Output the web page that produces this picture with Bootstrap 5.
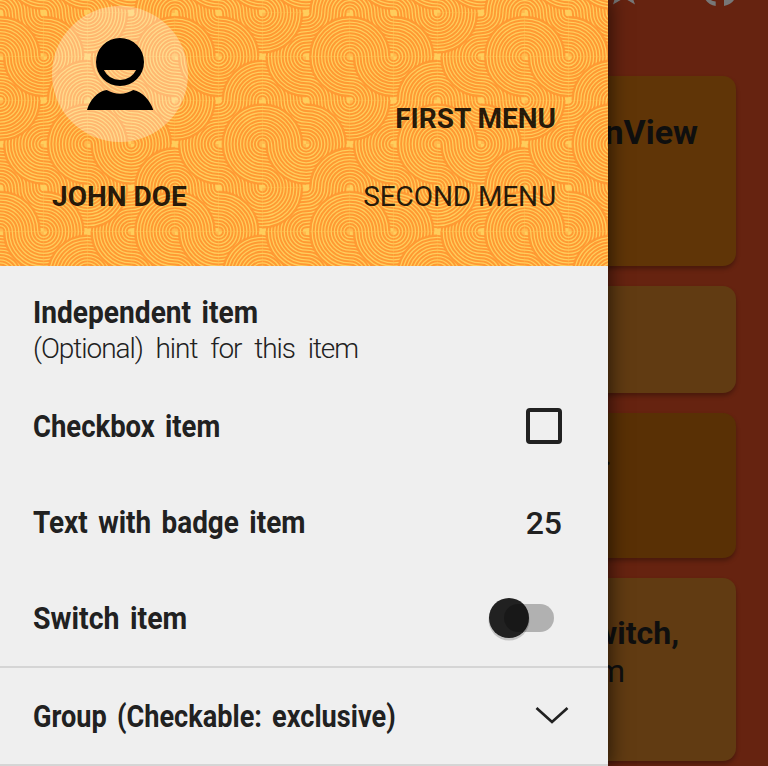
<!DOCTYPE html>
<html lang="en">
<head>
<meta charset="utf-8">
<title>Navigation drawer</title>
<link href="https://cdn.jsdelivr.net/npm/bootstrap@5.3.0/dist/css/bootstrap.min.css" rel="stylesheet">
<style>
body{font-family:Roboto,"Noto Sans",sans-serif;background:#662310;height:766px;color:#0f0f0f}
.stage{width:768px;height:766px}
.topbar{height:76px;padding:0 24px 0 0}
.topbar svg{height:8px}
.tiles{padding-right:32px;gap:20px}
.tile{border-radius:13px;box-shadow:0 3px 4px rgba(0,0,0,.28);padding-left:400px;flex:none;white-space:nowrap}
.tone-a{background:#603507}.tone-b{background:#613b12}.tone-c{background:#593005}
.h-1{height:190px;padding-top:34px;padding-right:38px;font-size:34px;line-height:44px}
.h-2{height:107px}
.h-3{height:145px;padding-top:22px;padding-right:124px;font-size:32px;line-height:38px}
.h-4{height:183px;padding-top:36px;font-size:32px;line-height:38px}
.line-1{padding-right:57px}.line-2{padding-right:111px}
.drawer{width:608px;background:#efefef;box-shadow:0 0 18px 2px rgba(0,0,0,.6);z-index:2}
.head{height:266px;background:#ffcc5c;color:rgba(0,0,0,.87);font-size:28px;line-height:34px}
.head-content{height:266px;padding:6px 52px 0}
.avatar{width:136px;height:136px;background:rgba(255,255,255,.3)}
.first-menu{line-height:28px;margin-bottom:9px}
.second-menu{letter-spacing:-.1px}
.names{height:34px;margin-top:38px}
.item{padding:0 46px 0 33px;height:96px;color:#212121;font-size:32px;line-height:38px;font-weight:700;background:none}
.item-first{height:112px;padding-top:16px}
.item-group{height:98px;padding-right:38px}
.hint{font-weight:300;font-size:28px;line-height:36px;letter-spacing:-1.05px;word-spacing:7px}
.rule{border-top:2px solid #d5d5d5}
.box{width:36px;height:36px;border:4px solid #212121;border-radius:4px}
.count{font-weight:500;padding-top:2px}
.label{display:inline-block;white-space:nowrap;word-spacing:4px;transform-origin:0 50%}
.s1{transform:scaleX(.879)}.s2{transform:scaleX(.858)}.s3{transform:scaleX(.872)}.s4{transform:scaleX(.89)}.s5{transform:scaleX(.848)}
</style>
<script src="https://cdn.jsdelivr.net/npm/bootstrap@5.3.0/dist/js/bootstrap.bundle.min.js"></script>
</head>
<body class="overflow-hidden">
<div class="stage position-relative overflow-hidden">
  <main>
    <div class="topbar d-flex justify-content-end align-items-start">
      <svg width="136" height="8" viewBox="608 0 136 8" fill="#777">
        <path d="M613 4.500L615.500-4H632L635 4.500 624-2z"/>
        <path d="M705.700 0Q709 5 715.700 6V1.500Q712 1 710-.500zM724 0v6Q731 4.500 734 0z"/>
      </svg>
    </div>
    <div class="tiles d-flex flex-column">
      <div class="tile tone-a h-1 text-end fw-bold">nView</div>
      <div class="tile tone-b h-2"></div>
      <div class="tile tone-c h-3 text-end">.</div>
      <div class="tile tone-b h-4">
        <div class="line-1 text-end fw-bold">witch,</div>
        <div class="line-2 text-end">m</div>
      </div>
    </div>
  </main>

  <aside class="drawer position-absolute top-0 start-0 h-100">
    <header class="head position-relative overflow-hidden">
      <svg class="position-absolute top-0 start-0" width="608" height="266" aria-hidden="true">
        <defs>
          <clipPath id="unit"><rect x="-.03" y="-.03" width="11.06" height="11.06"/></clipPath>
          <g id="rings">
            <circle r="1.090"/><circle r="1.892"/><circle r="2.694"/><circle r="3.495"/><circle r="4.297"/><circle r="5.099"/>
            <circle r="5.901"/><circle r="6.703"/><circle r="7.505"/><circle r="8.306"/><circle r="9.108"/><circle r="9.910"/>
          </g>
          <!-- one cell: a fan from the top-left corner laid over a fan from the bottom-right corner -->
          <g id="fan" clip-path="url(#unit)" fill="none" stroke="#ff9933" stroke-width=".48">
            <rect x="-.1" y="-.1" width="11.2" height="11.2" fill="#ffcd5c" stroke="none"/>
            <use href="#rings" x="11" y="11"/>
            <circle r="10.050" fill="#ffcd5c" stroke="#ff9430" stroke-opacity=".6" stroke-width=".5"/>
            <circle r=".9" fill="#ffb94d" stroke="none"/>
            <use href="#rings"/>
          </g>
          <g id="tl"><use href="#fan"/></g>
          <g id="tr"><use href="#fan" transform="translate(11 0) scale(-1 1)"/></g>
          <g id="bl"><use href="#fan" transform="translate(0 11) scale(1 -1)"/></g>
          <g id="br"><use href="#fan" transform="translate(11 11) scale(-1 -1)"/></g>
          <g id="band">
            <use href="#bl"/><use href="#tl" x="11"/><use href="#br" x="22"/><use href="#bl" x="33"/>
            <use href="#br" y="11"/><use href="#tr" x="11" y="11"/><use href="#tr" x="22" y="11"/><use href="#tr" x="33" y="11"/>
          </g>
          <g id="strip">
            <use href="#band" x="-44"/><use href="#band"/><use href="#band" x="44"/><use href="#band" x="88"/><use href="#band" x="132"/>
          </g>
        </defs>
        <g transform="translate(43.75 12.9) scale(3.9755)">
          <use href="#strip" x="-22" y="-22"/><use href="#strip"/><use href="#strip" x="-22" y="22"/>
          <use href="#strip" y="44"/>
        </g>
      </svg>
      <div class="head-content position-relative">
        <div class="d-flex justify-content-between">
          <div class="avatar rounded-circle">
            <svg class="d-block" width="136" height="136" viewBox="52 6 136 136">
              <path fill-rule="evenodd" d="M120 38a24 24 0 1 1 0 48 24 24 0 0 1 0-48zM103.900 70a18 18 0 0 0 32.200 0z"/>
              <path d="M87 110C90 99.500 97.500 91.500 106.700 90Q113 93.700 120 93.700T133.300 90C142.500 92 150 100 153.300 110z"/>
            </svg>
          </div>
          <div class="first-menu fw-bold align-self-end">FIRST MENU</div>
        </div>
        <div class="names d-flex justify-content-between">
          <div class="fw-bold">JOHN DOE</div>
          <div class="second-menu">SECOND MENU</div>
        </div>
      </div>
    </header>
    <div class="d-flex flex-column">
      <div class="item item-first d-flex flex-column justify-content-center">
        <div><span class="label s1">Independent item</span></div>
        <div class="hint">(Optional) hint for this item</div>
      </div>
      <div class="item d-flex align-items-center justify-content-between"><span class="label s2">Checkbox item</span><span class="box"></span></div>
      <div class="item d-flex align-items-center justify-content-between"><span class="label s3">Text with badge item</span><span class="count">25</span></div>
      <div class="item d-flex align-items-center justify-content-between"><span class="label s4">Switch item</span>
        <svg width="76" height="56" viewBox="486 590 76 56">
          <circle cx="509" cy="620" r="20.500" fill="#000" opacity=".18"/>
          <circle cx="509" cy="618" r="20" fill="#212121"/>
          <rect x="504" y="604" width="50" height="28" rx="14" fill="#000" fill-opacity=".26"/>
        </svg>
      </div>
      <div class="item item-group rule d-flex align-items-center justify-content-between"><span class="label s5">Group (Checkable: exclusive)</span>
        <svg width="36" height="20" viewBox="534 706 36 20" fill="none" stroke="#212121" stroke-width="2.700"><path d="M536.500 708L552 722l15.500-14"/></svg>
      </div>
      <div class="rule"></div>
    </div>
  </aside>
</div>
</body>
</html>
